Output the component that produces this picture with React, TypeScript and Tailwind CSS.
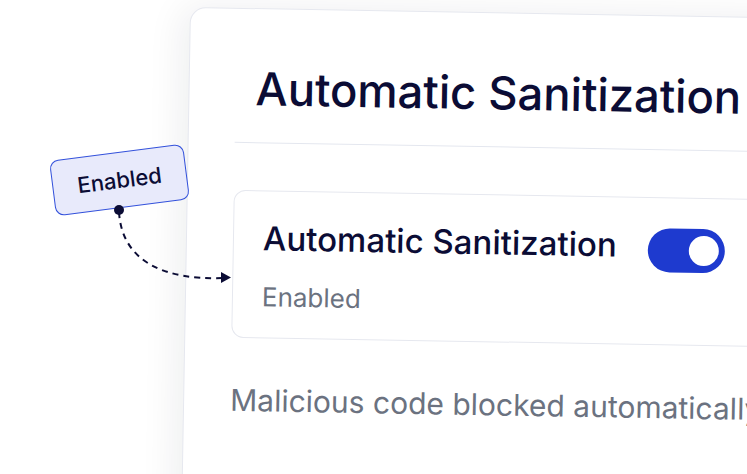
import React from "react";

export default function App() {
  return (
    <div
      className="relative w-[747px] h-[474px] overflow-hidden bg-white"
      style={{ fontFamily: "Inter, 'Noto Sans', sans-serif" }}
    >
      {/* Main card */}
      <div className="absolute left-[190px] top-[7px] w-[640px] h-[560px] origin-top-left rotate-[1deg] rounded-[16px] border border-[#e6e8ef] bg-white shadow-[-8px_0_36px_rgba(15,23,42,0.07)]">
        <div className="pl-[46px] pt-[52px]">
          <h1 className="pl-[20px] text-[45.5px] leading-[56px] font-medium text-[#0b0c35] tracking-[-0.1px] whitespace-nowrap">
            Automatic Sanitization
          </h1>
          <div className="mt-[25px] h-px bg-[#e4e7ef]" />
          <div className="mt-[47px] h-[148px] rounded-[12px] border border-[#e6e8ef] bg-white pl-[29px] pt-[20px] flex flex-col">
            <div className="flex items-center gap-[31px]">
              <span className="text-[33px] leading-[40px] font-medium text-[#0b0c35] whitespace-nowrap">
                Automatic Sanitization
              </span>
              <span className="relative mt-[10px] inline-block w-[77px] h-[44px] rounded-full bg-[#1e3acf] shrink-0">
                <span className="absolute right-[6px] top-[7px] w-[30px] h-[30px] rounded-full bg-white" />
              </span>
            </div>
            <span className="mt-[16px] text-[26px] leading-[32px] text-[#6b7280] whitespace-nowrap">
              Enabled
            </span>
          </div>
          <p className="mt-[43px] text-[30px] leading-[38px] text-[#6b7280] whitespace-nowrap">
            Malicious code blocked automatically
          </p>
        </div>
      </div>

      {/* Dashed connector */}
      <svg className="absolute left-0 top-0" width="747" height="474" viewBox="0 0 747 474">
        <path
          d="M119 212 C 122 262, 165 280, 222 278"
          fill="none"
          stroke="#0b0c35"
          strokeWidth="2"
          strokeDasharray="6 5"
        />
        <path d="M221 272 L231 277.5 L221 283 Z" fill="#0b0c35" />
      </svg>

      {/* Badge */}
      <div className="absolute left-[52px] top-[152px] w-[135px] h-[56px] -rotate-[7.3deg] rounded-[9px] border-[1.5px] border-[#3351db] bg-[#e8eafb] flex items-center justify-center">
        <span className="text-[22px] font-medium text-[#0b0c35]">Enabled</span>
      </div>
      <svg className="absolute left-0 top-0 pointer-events-none" width="747" height="474">
        <circle cx="119" cy="210" r="5" fill="#0b0c35" />
      </svg>
    </div>
  );
}
